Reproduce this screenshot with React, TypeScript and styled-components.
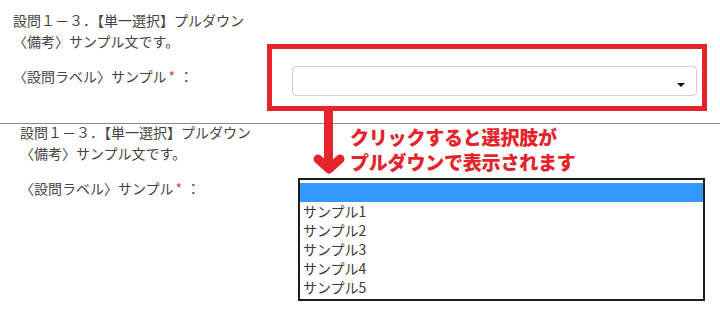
import React from "react";
import styled, { createGlobalStyle } from "styled-components";

const Global = createGlobalStyle`
  html, body { margin: 0; padding: 0; background: #fff; }
  body {
    font-family: "Noto Sans CJK JP", "Noto Sans", sans-serif;
    color: #444;
  }
`;

const Page = styled.div`
  position: relative;
  width: 720px;
  height: 313px;
  overflow: hidden;
  background: #fff;
`;

const Panel = styled.section<{ $indent: number; $height: number; $divider?: boolean }>`
  display: grid;
  grid-template-columns: ${(p) => 267 - p.$indent}px 1fr;
  box-sizing: border-box;
  height: ${(p) => p.$height}px;
  padding-left: ${(p) => p.$indent}px;
  border-bottom: ${(p) => (p.$divider ? "1px solid #8a8a8a" : "none")};
`;

const Question = styled.div<{ $top: number }>`
  margin-top: ${(p) => p.$top}px;
  font-size: 14px;
  line-height: 21px;
  white-space: nowrap;
`;

const Line = styled.div``;

const Label = styled.div`
  margin-top: 14px;
`;

const Req = styled.span`
  color: #b94a48;
  margin: 0 4px 0 2px;
`;

const Highlight = styled.div`
  margin-top: 44px;
  width: 440px;
  height: 67px;
  box-sizing: border-box;
  border: 5px solid #e5232b;
  padding: 17px 5px 0 20px;
`;

const Select = styled.div`
  position: relative;
  height: 30px;
  box-sizing: border-box;
  border: 1px solid #cfcfcf;
  border-radius: 4px;
  background: #fff;
`;

const Caret = styled.span`
  position: absolute;
  right: 11px;
  top: 16px;
  width: 0;
  height: 0;
  border-left: 4px solid transparent;
  border-right: 4px solid transparent;
  border-top: 4px solid #111;
`;

const Right = styled.div<{ $shift: number }>`
  display: flex;
  flex-direction: column;
  padding-left: ${(p) => p.$shift}px;
`;

const Note = styled.div`
  margin-top: 0;
  padding-left: 52px;
  font-size: 19px;
  line-height: 25px;
  font-weight: 900;
  color: #e5232b;
  letter-spacing: -0.2px;
  white-space: nowrap;
`;

const List = styled.ul`
  list-style: none;
  margin: 4px 0 0 0;
  width: 407px;
  box-sizing: border-box;
  border: 2px solid #1e1e1e;
  padding: 3px 0 2px;
  background: #fff;
`;

const Option = styled.li<{ $active?: boolean }>`
  height: 19px;
  line-height: 19px;
  padding-left: 3px;
  font-size: 14px;
  color: #3a3a3a;
  background: ${(p) => (p.$active ? "#3399ff" : "transparent")};
`;

const Arrow = styled.svg`
  position: absolute;
  left: 313px;
  top: 110px;
`;

function QuestionBlock({ top }: { top: number }) {
  return (
    <Question $top={top}>
      <Line>設問１－３．【単一選択】プルダウン</Line>
      <Line>〈備考〉サンプル文です。</Line>
      <Label>
        〈設問ラベル〉サンプル<Req>*</Req>：
      </Label>
    </Question>
  );
}

export default function App() {
  const options = ["サンプル1", "サンプル2", "サンプル3", "サンプル4", "サンプル5"];
  return (
    <>
      <Global />
      <Page>
        <Panel $indent={13} $height={124} $divider>
          <QuestionBlock top={10} />
          <div>
            <Highlight>
              <Select>
                <Caret />
              </Select>
            </Highlight>
          </div>
        </Panel>
        <Panel $indent={20} $height={189}>
          <QuestionBlock top={-2} />
          <Right $shift={31}>
            <Note>
              クリックすると選択肢が
              <br />
              プルダウンで表示されます
            </Note>
            <List>
              <Option $active>&nbsp;</Option>
              {options.map((o) => (
                <Option key={o}>{o}</Option>
              ))}
            </List>
          </Right>
        </Panel>
        <Arrow width="34" height="66" viewBox="0 0 34 66">
          <rect x="11" y="0" width="9" height="55" fill="#e5232b" />
          <polyline
            points="5,49 16,59 27,49"
            fill="none"
            stroke="#e5232b"
            strokeWidth="9"
            strokeLinecap="round"
            strokeLinejoin="round"
          />
        </Arrow>
      </Page>
    </>
  );
}
